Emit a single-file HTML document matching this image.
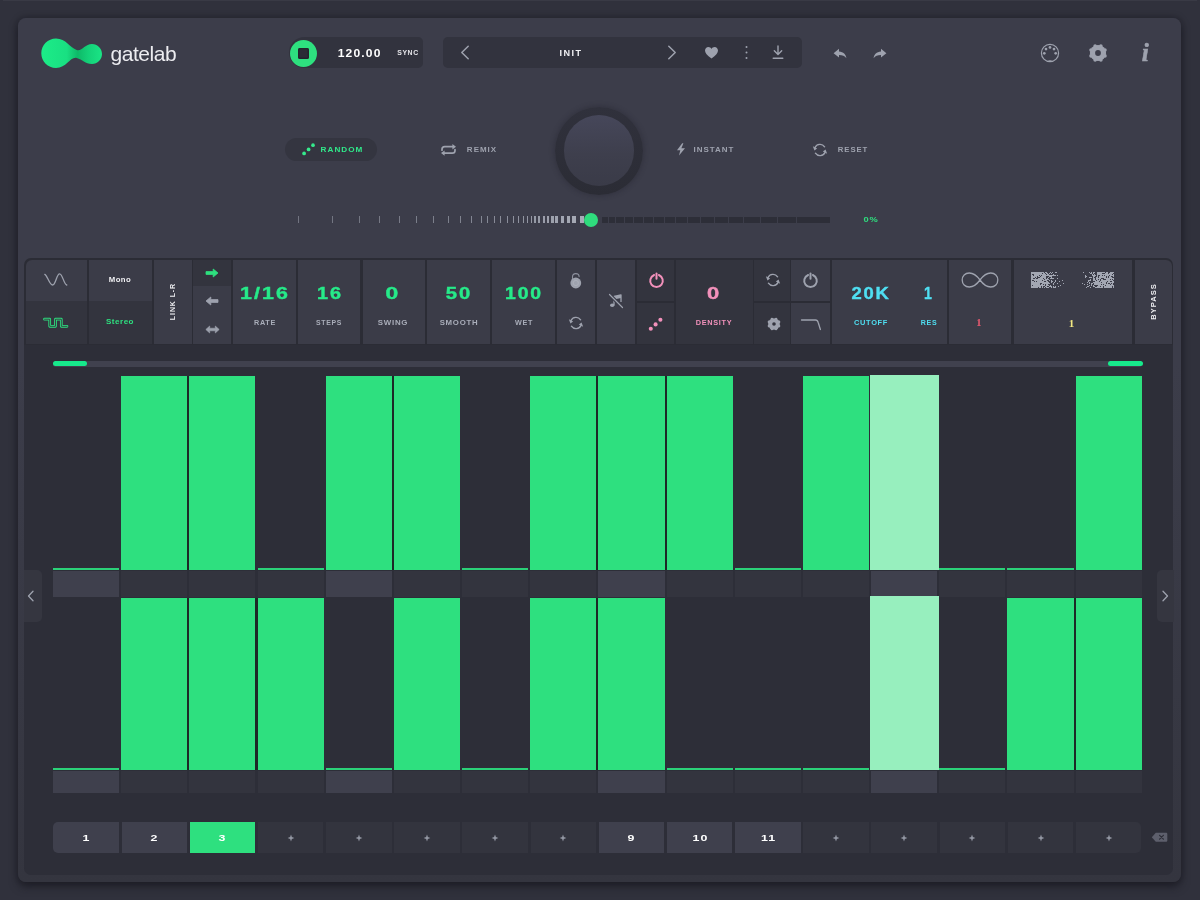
<!DOCTYPE html>
<html lang="en"><head><meta charset="utf-8"><title>gatelab</title>
<style>
html,body{margin:0;padding:0;}
body{width:1200px;height:900px;overflow:hidden;position:relative;background:#30313c;font-family:"Liberation Sans",sans-serif;}
.b{position:absolute;display:block;}
.t{position:absolute;white-space:nowrap;line-height:1;font-family:"Liberation Sans",sans-serif;}
#root{position:absolute;left:0;top:0;width:1200px;height:900px;will-change:transform;}
</style></head><body><div id="root">
<div class="b" style="left:18px;top:18px;width:1163px;height:863.5px;background:linear-gradient(180deg,#3c3d4a 0%,#3c3d4a 40%,#34353f 100%);border-radius:8px;box-shadow:0 5px 9px rgba(20,20,28,.55),0 0 7px rgba(20,20,28,.4);"></div>
<div class="b" style="left:3px;top:0px;width:1194px;height:1.2px;background:#393a45;"></div>
<svg class="b" style="left:40px;top:36px;" width="64" height="34" viewBox="0 0 64 34"><defs><linearGradient id="lg" x1="0" x2="1" y1="0" y2="0"><stop offset="0" stop-color="#1cec88"/><stop offset=".42" stop-color="#19e082"/><stop offset=".60" stop-color="#0eb968"/><stop offset=".78" stop-color="#14d279"/><stop offset="1" stop-color="#1ae485"/></linearGradient></defs>
<path d="M16 2.600 C26 2.600 30 12 36.700 14 C42 15.500 45 8 52 8 C57.500 8 62 12.500 62 18 C62 23.500 57.500 28 52 28 C45 28 42.500 23.500 36.700 22 C30 20.500 27 32 16 32 C7.900 32 1.300 25.400 1.300 17.300 C1.300 9.200 7.900 2.600 16 2.600 Z" fill="url(#lg)"/></svg>
<div class="t" style="left:110.500px;top:42.900px;font-size:21px;color:#ececf0;letter-spacing:-0.450px;font-weight:400;">gatelab</div>
<div class="b" style="left:289px;top:37px;width:134px;height:31px;background:#32333e;border-radius:16px 5px 5px 16px;"></div>
<div class="b" style="left:289.5px;top:39.5px;width:27px;height:27px;background:#2ee07f;border-radius:50%;"></div>
<div class="b" style="left:297.5px;top:47.5px;width:11px;height:11px;background:#2b2c36;border-radius:2px;box-shadow:inset 0 0 0 1.5px #23242c;"></div>
<div class="t" style="left:358.7px;top:54px;font-size:11.5px;color:#fff;letter-spacing:1.1px;padding-left:1.1px;font-weight:700;transform:translate(-50%,-50%) scaleX(1.05);">120.00</div>
<div class="t" style="left:408.0px;top:52px;font-size:7px;color:#e6e6ea;letter-spacing:0.6px;margin-left:0.30px;font-weight:700;transform:translate(-50%,-50%) scaleX(0.98);">SYNC</div>
<div class="b" style="left:443px;top:37px;width:359px;height:31px;background:#32333e;border-radius:5px;"></div>
<svg class="b" style="left:458px;top:44px;" width="14" height="17" viewBox="0 0 14 17"><path d="M10.200 2.200 L3.800 8.500 L10.200 14.800" fill="none" stroke="#9ea2ae" stroke-width="1.500" stroke-linecap="round" stroke-linejoin="round"/></svg>
<svg class="b" style="left:665px;top:44px;" width="14" height="17" viewBox="0 0 14 17"><path d="M3.800 2.200 L10.200 8.500 L3.800 14.800" fill="none" stroke="#9ea2ae" stroke-width="1.500" stroke-linecap="round" stroke-linejoin="round"/></svg>
<div class="t" style="left:570.2px;top:52.8px;font-size:8.5px;color:#f0f0f3;letter-spacing:1.4px;margin-left:0.70px;font-weight:700;transform:translate(-50%,-50%) scaleX(1.066);">INIT</div>
<svg class="b" style="left:704px;top:46px;" width="15" height="14" viewBox="0 0 15 14"><path d="M7.500 12.500 C3 9.500 1 7 1 4.600 C1 2.500 2.600 1 4.400 1 C5.700 1 6.900 1.700 7.500 2.900 C8.100 1.700 9.300 1 10.600 1 C12.400 1 14 2.500 14 4.600 C14 7 12 9.500 7.500 12.500 Z" fill="#9ea2ae"/></svg>
<svg class="b" style="left:744px;top:45px;" width="5" height="15" viewBox="0 0 5 15"><circle cx="2.500" cy="2" r="1" fill="#9ea2ae"/><circle cx="2.500" cy="7.500" r="1" fill="#9ea2ae"/><circle cx="2.500" cy="13" r="1" fill="#9ea2ae"/></svg>
<svg class="b" style="left:772px;top:45px;" width="12" height="15" viewBox="0 0 12 15"><path d="M6 1 V9 M2.300 5.800 L6 9.500 L9.700 5.800 M1.200 13.200 H10.800" fill="none" stroke="#9ea2ae" stroke-width="1.400" stroke-linecap="round" stroke-linejoin="round"/></svg>
<svg class="b" style="left:833px;top:47.5px;" width="14" height="11" viewBox="0 0 14 11"><path d="M6 0.800 L0.600 5.200 L6 9.600 V6.900 C9.500 6.900 11.800 7.800 13.400 10.200 C12.900 6.200 10.500 3.700 6 3.400 Z" fill="#9ea2ae"/></svg>
<svg class="b" style="left:873px;top:47.5px;" width="14" height="11" viewBox="0 0 14 11"><g transform="translate(14,0) scale(-1,1)"><path d="M6 0.800 L0.600 5.200 L6 9.600 V6.900 C9.500 6.900 11.800 7.800 13.400 10.200 C12.900 6.200 10.500 3.700 6 3.400 Z" fill="#9ea2ae"/></g></svg>
<svg class="b" style="left:1039.5px;top:42.5px;" width="20" height="20" viewBox="0 0 20 20"><circle cx="10" cy="10" r="8.600" fill="none" stroke="#9ea2ae" stroke-width="1.200"/><circle cx="4.300" cy="10.300" r="1.350" fill="#9ea2ae"/><circle cx="6" cy="6.100" r="1.350" fill="#9ea2ae"/><circle cx="10" cy="4.400" r="1.350" fill="#9ea2ae"/><circle cx="14" cy="6.100" r="1.350" fill="#9ea2ae"/><circle cx="15.700" cy="10.300" r="1.350" fill="#9ea2ae"/><rect x="8.500" y="17.300" width="3" height="1.600" fill="#9ea2ae"/></svg>
<svg class="b" style="left:1087.5px;top:42.5px;" width="20" height="20" viewBox="0 0 20 20"><circle cx="10" cy="10" r="8.10" fill="#9ea2ae"/><circle cx="12.89" cy="3.02" r="1.80" fill="#9ea2ae"/><circle cx="16.98" cy="7.11" r="1.80" fill="#9ea2ae"/><circle cx="16.98" cy="12.89" r="1.80" fill="#9ea2ae"/><circle cx="12.89" cy="16.98" r="1.80" fill="#9ea2ae"/><circle cx="7.11" cy="16.98" r="1.80" fill="#9ea2ae"/><circle cx="3.02" cy="12.89" r="1.80" fill="#9ea2ae"/><circle cx="3.02" cy="7.11" r="1.80" fill="#9ea2ae"/><circle cx="7.11" cy="3.02" r="1.80" fill="#9ea2ae"/><circle cx="10" cy="10" r="2.9" fill="#3c3d4a"/></svg>
<div class="t" style="left:1145.3px;top:52.5px;font-size:25.5px;color:#9ea2ae;letter-spacing:0px;padding-left:0px;font-weight:700;transform:translate(-50%,-50%);font-style:italic;-webkit-text-stroke:0.5px;font-family:'Liberation Serif',serif;">i</div>
<div class="b" style="left:285px;top:137.5px;width:91.5px;height:23.2px;background:#343540;border-radius:12px;"></div>
<svg class="b" style="left:300px;top:142px;" width="16" height="14" viewBox="0 0 16 14"><circle cx="4.100" cy="11.400" r="1.850" fill="#35ea8c"/><circle cx="8.600" cy="7.400" r="1.850" fill="#35ea8c"/><circle cx="13" cy="3.200" r="1.850" fill="#35ea8c"/></svg>
<div class="t" style="left:341.4px;top:149.8px;font-size:8px;color:#30e98a;letter-spacing:1.0px;margin-left:0.50px;font-weight:700;transform:translate(-50%,-50%) scaleX(1.019);">RANDOM</div>
<svg class="b" style="left:440px;top:143px;" width="17" height="14" viewBox="0 0 17 14"><path d="M2 7.200 V6.400 C2 4.800 3.200 3.700 4.700 3.700 H13 M15 6.600 V7.400 C15 9 13.800 10.100 12.300 10.100 H4" fill="none" stroke="#9ea2ae" stroke-width="1.700" stroke-linecap="round" stroke-linejoin="round"/><path d="M12.400 1 L16 3.700 L12.400 6.400Z M4.600 7.400 L1 10.100 L4.600 12.800Z" fill="#9ea2ae"/></svg>
<div class="t" style="left:481.6px;top:149.8px;font-size:8px;color:#9ea2ae;letter-spacing:1.0px;margin-left:0.50px;font-weight:700;transform:translate(-50%,-50%) scaleX(0.997);">REMIX</div>
<div class="b" style="left:554.5px;top:106.5px;width:88px;height:88px;background:linear-gradient(180deg,#30313c,#2b2c35);border-radius:50%;box-shadow:0 0 5px 1px rgba(38,38,48,.45);"></div>
<div class="b" style="left:563.5px;top:115px;width:70.5px;height:70.5px;background:linear-gradient(180deg,#46475a 0%,#3e3f4d 55%,#3a3b48 100%);border-radius:50%;"></div>
<svg class="b" style="left:676px;top:143px;" width="10" height="13" viewBox="0 0 10 13"><path d="M6.200 0.300 L1 7.200 H4.300 L3 12.600 L9 5.200 H5.400 L7.400 0.300 Z" fill="#9ea2ae"/></svg>
<div class="t" style="left:713.5px;top:149.8px;font-size:8px;color:#9ea2ae;letter-spacing:1.0px;margin-left:0.50px;font-weight:700;transform:translate(-50%,-50%) scaleX(0.997);">INSTANT</div>
<svg class="b" style="left:811px;top:141px;" width="18" height="18" viewBox="0 0 18 18"><path d="M13.59 5.79 A5.6 5.6 0 0 0 3.92 6.63" fill="none" stroke="#9ea2ae" stroke-width="1.4" stroke-linecap="round"/><path d="M6.15 7.55 L1.87 5.37 L3.42 9.49Z" fill="#9ea2ae"/><path d="M4.41 12.21 A5.6 5.6 0 0 0 14.08 11.37" fill="none" stroke="#9ea2ae" stroke-width="1.4" stroke-linecap="round"/><path d="M11.85 10.45 L16.13 12.63 L14.58 8.51Z" fill="#9ea2ae"/></svg>
<div class="t" style="left:852.7px;top:149.8px;font-size:8px;color:#9ea2ae;letter-spacing:1.0px;margin-left:0.50px;font-weight:700;transform:translate(-50%,-50%) scaleX(0.963);">RESET</div>
<div class="b" style="left:297.9px;top:216.1px;width:1.2px;height:7.2px;background:#a7abb7;opacity:0.50;"></div>
<div class="b" style="left:331.9px;top:216.1px;width:1.2px;height:7.2px;background:#a7abb7;opacity:0.52;"></div>
<div class="b" style="left:358.9px;top:216.1px;width:1.2px;height:7.2px;background:#a7abb7;opacity:0.53;"></div>
<div class="b" style="left:378.9px;top:216.1px;width:1.2px;height:7.2px;background:#a7abb7;opacity:0.55;"></div>
<div class="b" style="left:398.9px;top:216.1px;width:1.2px;height:7.2px;background:#a7abb7;opacity:0.57;"></div>
<div class="b" style="left:415.9px;top:216.1px;width:1.2px;height:7.2px;background:#a7abb7;opacity:0.59;"></div>
<div class="b" style="left:432.9px;top:216.1px;width:1.2px;height:7.2px;background:#a7abb7;opacity:0.60;"></div>
<div class="b" style="left:447.9px;top:216.1px;width:1.2px;height:7.2px;background:#a7abb7;opacity:0.62;"></div>
<div class="b" style="left:459.9px;top:216.1px;width:1.2px;height:7.2px;background:#a7abb7;opacity:0.64;"></div>
<div class="b" style="left:470.9px;top:216.1px;width:1.2px;height:7.2px;background:#a7abb7;opacity:0.66;"></div>
<div class="b" style="left:480.9px;top:216.1px;width:1.2px;height:7.2px;background:#a7abb7;opacity:0.67;"></div>
<div class="b" style="left:486.89px;top:216.1px;width:1.21px;height:7.2px;background:#a7abb7;opacity:0.69;"></div>
<div class="b" style="left:493.89px;top:216.1px;width:1.22px;height:7.2px;background:#a7abb7;opacity:0.71;"></div>
<div class="b" style="left:499.88px;top:216.1px;width:1.25px;height:7.2px;background:#a7abb7;opacity:0.72;"></div>
<div class="b" style="left:506.86px;top:216.1px;width:1.28px;height:7.2px;background:#a7abb7;opacity:0.74;"></div>
<div class="b" style="left:512.84px;top:216.1px;width:1.33px;height:7.2px;background:#a7abb7;opacity:0.76;"></div>
<div class="b" style="left:517.8px;top:216.1px;width:1.39px;height:7.2px;background:#a7abb7;opacity:0.78;"></div>
<div class="b" style="left:522.76px;top:216.1px;width:1.47px;height:7.2px;background:#a7abb7;opacity:0.79;"></div>
<div class="b" style="left:526.92px;top:216.1px;width:1.57px;height:7.2px;background:#a7abb7;opacity:0.81;"></div>
<div class="b" style="left:530.65px;top:216.1px;width:1.69px;height:7.2px;background:#a7abb7;opacity:0.83;"></div>
<div class="b" style="left:534.49px;top:216.1px;width:1.83px;height:7.2px;background:#a7abb7;opacity:0.84;"></div>
<div class="b" style="left:538.29px;top:216.1px;width:2.01px;height:7.2px;background:#a7abb7;opacity:0.86;"></div>
<div class="b" style="left:542.6px;top:216.1px;width:2.21px;height:7.2px;background:#a7abb7;opacity:0.88;"></div>
<div class="b" style="left:546.58px;top:216.1px;width:2.44px;height:7.2px;background:#a7abb7;opacity:0.90;"></div>
<div class="b" style="left:550.85px;top:216.1px;width:2.7px;height:7.2px;background:#a7abb7;opacity:0.91;"></div>
<div class="b" style="left:555.4px;top:216.1px;width:3.0px;height:7.2px;background:#a7abb7;opacity:0.93;"></div>
<div class="b" style="left:560.83px;top:216.1px;width:3.34px;height:7.2px;background:#a7abb7;opacity:0.95;"></div>
<div class="b" style="left:566.64px;top:216.1px;width:3.72px;height:7.2px;background:#a7abb7;opacity:0.97;"></div>
<div class="b" style="left:572.13px;top:216.1px;width:4.14px;height:7.2px;background:#a7abb7;opacity:0.98;"></div>
<div class="b" style="left:579.7px;top:216.1px;width:4.6px;height:7.2px;background:#a7abb7;opacity:1.00;"></div>
<div class="b" style="left:601.8px;top:216.6px;width:3.1px;height:6.7px;background:#2d2e38;"></div>
<div class="b" style="left:605.1px;top:216.6px;width:3.1px;height:6.7px;background:#2d2e38;"></div>
<div class="b" style="left:609.1px;top:216.6px;width:6.1px;height:6.7px;background:#2d2e38;"></div>
<div class="b" style="left:616.4px;top:216.6px;width:7.9px;height:6.7px;background:#2d2e38;"></div>
<div class="b" style="left:624.8px;top:216.6px;width:8.1px;height:6.7px;background:#2d2e38;"></div>
<div class="b" style="left:634.1px;top:216.6px;width:8.5px;height:6.7px;background:#2d2e38;"></div>
<div class="b" style="left:643.8px;top:216.6px;width:9.5px;height:6.7px;background:#2d2e38;"></div>
<div class="b" style="left:654.1px;top:216.6px;width:9.7px;height:6.7px;background:#2d2e38;"></div>
<div class="b" style="left:664.8px;top:216.6px;width:10.5px;height:6.7px;background:#2d2e38;"></div>
<div class="b" style="left:676.4px;top:216.6px;width:10.9px;height:6.7px;background:#2d2e38;"></div>
<div class="b" style="left:688.4px;top:216.6px;width:11.3px;height:6.7px;background:#2d2e38;"></div>
<div class="b" style="left:701.1px;top:216.6px;width:13.1px;height:6.7px;background:#2d2e38;"></div>
<div class="b" style="left:715.4px;top:216.6px;width:12.9px;height:6.7px;background:#2d2e38;"></div>
<div class="b" style="left:729.4px;top:216.6px;width:13.9px;height:6.7px;background:#2d2e38;"></div>
<div class="b" style="left:744.4px;top:216.6px;width:15.3px;height:6.7px;background:#2d2e38;"></div>
<div class="b" style="left:760.8px;top:216.6px;width:16.5px;height:6.7px;background:#2d2e38;"></div>
<div class="b" style="left:778.4px;top:216.6px;width:17.9px;height:6.7px;background:#2d2e38;"></div>
<div class="b" style="left:797.4px;top:216.6px;width:32.9px;height:6.7px;background:#2d2e38;"></div>
<div class="b" style="left:584px;top:212.5px;width:14px;height:14px;background:#2fdc7d;border-radius:50%;"></div>
<div class="t" style="left:870.5px;top:219.9px;font-size:8px;color:#2ee07f;letter-spacing:0.6px;margin-left:0.30px;font-weight:700;transform:translate(-50%,-50%) scaleX(1.16);">0%</div>
<div class="b" style="left:24px;top:344px;width:1149px;height:530.5px;background:#2d2e38;border-radius:0 0 7px 7px;"></div>
<div class="b" style="left:24px;top:258px;width:1149px;height:87px;background:#2b2c35;border-radius:7px 7px 0 0;"></div>
<div class="b" style="left:25.6px;top:259.5px;width:61.4px;height:41.5px;background:#3b3c48;border-radius:6px 0 0 0;"></div>
<div class="b" style="left:25.6px;top:301px;width:61.4px;height:42.5px;background:#33343e;"></div>
<div class="b" style="left:89px;top:259.5px;width:62.6px;height:41.5px;background:#3b3c48;"></div>
<div class="b" style="left:89px;top:301px;width:62.6px;height:42.5px;background:#33343e;"></div>
<div class="b" style="left:153.6px;top:259.5px;width:38.0px;height:84.0px;background:#3b3c48;"></div>
<div class="b" style="left:193px;top:259.5px;width:38px;height:26.5px;background:#33343e;"></div>
<div class="b" style="left:193px;top:286px;width:38px;height:57.5px;background:#3b3c48;"></div>
<div class="b" style="left:233.4px;top:259.5px;width:62.6px;height:84.0px;background:#3b3c48;"></div>
<div class="b" style="left:298px;top:259.5px;width:62.4px;height:84.0px;background:#3b3c48;"></div>
<div class="b" style="left:362.6px;top:259.5px;width:62.2px;height:84.0px;background:#3b3c48;"></div>
<div class="b" style="left:427.4px;top:259.5px;width:63.0px;height:84.0px;background:#3b3c48;"></div>
<div class="b" style="left:492.4px;top:259.5px;width:62.6px;height:84.0px;background:#3b3c48;"></div>
<div class="b" style="left:557px;top:259.5px;width:38px;height:84.0px;background:#3b3c48;"></div>
<div class="b" style="left:597px;top:259.5px;width:38px;height:84.0px;background:#3b3c48;"></div>
<div class="b" style="left:636.6px;top:259.5px;width:37.8px;height:41.0px;background:#33343e;"></div>
<div class="b" style="left:636.6px;top:302.5px;width:37.8px;height:41.0px;background:#33343e;"></div>
<div class="b" style="left:676.4px;top:259.5px;width:76.6px;height:84.0px;background:#33343e;"></div>
<div class="b" style="left:754.4px;top:259.5px;width:35.2px;height:41.0px;background:#33343e;"></div>
<div class="b" style="left:754.4px;top:302.5px;width:35.2px;height:41.0px;background:#33343e;"></div>
<div class="b" style="left:791.2px;top:259.5px;width:38.8px;height:41.0px;background:#3b3c48;"></div>
<div class="b" style="left:791.2px;top:302.5px;width:38.8px;height:41.0px;background:#3b3c48;"></div>
<div class="b" style="left:832.4px;top:259.5px;width:114.6px;height:84.0px;background:#3b3c48;"></div>
<div class="b" style="left:949px;top:259.5px;width:62.4px;height:84.0px;background:#3b3c48;"></div>
<div class="b" style="left:1013.6px;top:259.5px;width:118.9px;height:84.0px;background:#3b3c48;"></div>
<div class="b" style="left:1134.7px;top:259.5px;width:37.8px;height:84.0px;background:#3b3c48;border-radius:0 6px 0 0;"></div>
<svg class="b" style="left:43px;top:268px;" width="26" height="22" viewBox="0 0 26 22"><path d="M1.800 6.300 C4.300 7.300 6.300 17 9.600 17 C12.900 17 13.500 5.800 16.600 5.800 C19.700 5.800 20.700 16.300 23.700 17" fill="none" stroke="#9ea2ae" stroke-width="1.300" stroke-linecap="round"/></svg>
<svg class="b" style="left:43px;top:314px;" width="26" height="18" viewBox="0 0 26 18"><path d="M1.500 5.200 H6.700 V12.300 H12.500 V5.200 H18.300 V12.300 H24" fill="none" stroke="#2ee07f" stroke-width="2.700" stroke-linejoin="round" stroke-linecap="round"/><path d="M1.500 5.200 H6.700 V12.300 H12.500 V5.200 H18.300 V12.300 H24" fill="none" stroke="#33343e" stroke-width="0.900" stroke-linejoin="round" stroke-linecap="round"/></svg>
<div class="t" style="left:120.0px;top:280.3px;font-size:8px;color:#f0f0f3;letter-spacing:0.5px;margin-left:0.25px;font-weight:700;transform:translate(-50%,-50%) scaleX(0.97);">Mono</div>
<div class="t" style="left:119.7px;top:322.3px;font-size:8px;color:#2ee07f;letter-spacing:0.5px;margin-left:0.25px;font-weight:700;transform:translate(-50%,-50%) scaleX(1.006);">Stereo</div>
<div class="t" style="left:171.700px;top:302px;font-size:7px;color:#f0f0f3;letter-spacing:0.900px;padding-left:0.900px;font-weight:700;transform:translate(-50%,-50%) rotate(-90deg);">LINK L-R</div>
<svg class="b" style="left:205px;top:268px;" width="14" height="10" viewBox="0 0 14 10"><path d="M1 3.600 H8.200 V1 L13 5 L8.200 9 V6.400 H1 Z" fill="#2ee07f" stroke="#2ee07f" stroke-width="0.800" stroke-linejoin="round"/></svg>
<svg class="b" style="left:205px;top:296px;" width="14" height="10" viewBox="0 0 14 10"><g transform="translate(14,0) scale(-1,1)"><path d="M1 3.600 H8.200 V1 L13 5 L8.200 9 V6.400 H1 Z" fill="#9ea2ae" stroke="#9ea2ae" stroke-width="0.800" stroke-linejoin="round"/></g></svg>
<svg class="b" style="left:204.5px;top:324.5px;" width="15" height="9" viewBox="0 0 15 9"><path d="M4.700 1 L0.800 4.500 L4.700 8 V5.800 H10.300 V8 L14.200 4.500 L10.300 1 V3.200 H4.700 Z" fill="#9ea2ae" stroke="#9ea2ae" stroke-width="0.600" stroke-linejoin="round"/></svg>
<div class="t" style="left:264.0px;top:294.4px;font-size:16.8px;color:#26ea89;letter-spacing:1.6px;margin-left:0.80px;font-weight:700;transform:translate(-50%,-50%) scaleX(1.274);-webkit-text-stroke:0.4px;">1/16</div>
<div class="t" style="left:264.2px;top:323px;font-size:7.5px;color:#a9adb9;letter-spacing:0.7px;margin-left:0.35px;font-weight:700;transform:translate(-50%,-50%) scaleX(0.969);">RATE</div>
<div class="t" style="left:328.8px;top:294.4px;font-size:16.8px;color:#26ea89;letter-spacing:1.6px;margin-left:0.80px;font-weight:700;transform:translate(-50%,-50%) scaleX(1.182);-webkit-text-stroke:0.4px;">16</div>
<div class="t" style="left:328.8px;top:323px;font-size:7.5px;color:#a9adb9;letter-spacing:0.7px;margin-left:0.35px;font-weight:700;transform:translate(-50%,-50%) scaleX(0.921);">STEPS</div>
<div class="t" style="left:392.0px;top:294.4px;font-size:16.8px;color:#26ea89;letter-spacing:1.6px;margin-left:0.80px;font-weight:700;transform:translate(-50%,-50%) scaleX(1.365);-webkit-text-stroke:0.4px;">0</div>
<div class="t" style="left:393.0px;top:323px;font-size:7.5px;color:#a9adb9;letter-spacing:0.7px;margin-left:0.35px;font-weight:700;transform:translate(-50%,-50%) scaleX(1.054);">SWING</div>
<div class="t" style="left:458.0px;top:294.4px;font-size:16.8px;color:#26ea89;letter-spacing:1.6px;margin-left:0.80px;font-weight:700;transform:translate(-50%,-50%) scaleX(1.204);-webkit-text-stroke:0.4px;">50</div>
<div class="t" style="left:458.5px;top:323px;font-size:7.5px;color:#a9adb9;letter-spacing:0.7px;margin-left:0.35px;font-weight:700;transform:translate(-50%,-50%) scaleX(1.042);">SMOOTH</div>
<div class="t" style="left:523.3px;top:294.4px;font-size:16.8px;color:#26ea89;letter-spacing:1.6px;margin-left:0.80px;font-weight:700;transform:translate(-50%,-50%) scaleX(1.157);-webkit-text-stroke:0.4px;">100</div>
<div class="t" style="left:523.2px;top:323px;font-size:7.5px;color:#a9adb9;letter-spacing:0.7px;margin-left:0.35px;font-weight:700;transform:translate(-50%,-50%) scaleX(0.956);">WET</div>
<svg class="b" style="left:568px;top:272px;" width="16" height="18" viewBox="0 0 16 18"><path d="M4.500 8 V5 C4.500 3 5.900 1.600 7.800 1.600 C9.700 1.600 11.100 3 11.100 4.600" fill="none" stroke="#8d919e" stroke-width="1.100" stroke-linecap="round"/><circle cx="7.800" cy="11" r="5.400" fill="#9ea2ae"/><circle cx="7.800" cy="11" r="2.600" fill="none" stroke="#aeb2bd" stroke-width="0.800"/></svg>
<svg class="b" style="left:566.5px;top:313.5px;" width="18" height="18" viewBox="0 0 18 18"><path d="M13.59 5.79 A5.6 5.6 0 0 0 3.92 6.63" fill="none" stroke="#9ea2ae" stroke-width="1.4" stroke-linecap="round"/><path d="M6.15 7.55 L1.87 5.37 L3.42 9.49Z" fill="#9ea2ae"/><path d="M4.41 12.21 A5.6 5.6 0 0 0 14.08 11.37" fill="none" stroke="#9ea2ae" stroke-width="1.4" stroke-linecap="round"/><path d="M11.85 10.45 L16.13 12.63 L14.58 8.51Z" fill="#9ea2ae"/></svg>
<svg class="b" style="left:607px;top:292px;" width="18" height="18" viewBox="0 0 18 18"><path d="M7 13 V4.500 L14 3 V10" fill="none" stroke="#9ea2ae" stroke-width="1.300" stroke-linejoin="round"/><path d="M7 4.500 L14 3 V6 L7 7.500Z" fill="#9ea2ae"/><ellipse cx="5.200" cy="13.200" rx="2.200" ry="1.800" fill="#9ea2ae"/><path d="M2.500 2.500 L15.500 15.500" stroke="#3b3c48" stroke-width="3.400"/><path d="M2.500 2.500 L15.500 15.500" stroke="#9ea2ae" stroke-width="1.200" stroke-linecap="round"/></svg>
<svg class="b" style="left:647.5px;top:272.1px;" width="17" height="17" viewBox="0 0 17 17"><path d="M6.100 3 A6.300 6.300 0 1 0 10.900 3" fill="none" stroke="#f391bb" stroke-width="2" stroke-linecap="round"/><path d="M8.500 1.500 V6.800" stroke="#f391bb" stroke-width="2" stroke-linecap="round"/></svg>
<svg class="b" style="left:646px;top:315px;" width="18" height="18" viewBox="0 0 18 18"><circle cx="4.800" cy="13.800" r="2.050" fill="#f391bb"/><circle cx="9.600" cy="9.400" r="2.050" fill="#f391bb"/><circle cx="14.400" cy="4.800" r="2.050" fill="#f391bb"/></svg>
<div class="t" style="left:713.2px;top:294.4px;font-size:16.8px;color:#f391bb;letter-spacing:0px;margin-left:0.00px;font-weight:700;transform:translate(-50%,-50%) scaleX(1.31);-webkit-text-stroke:0.4px;">0</div>
<div class="t" style="left:714.1px;top:323px;font-size:7.5px;color:#f391bb;letter-spacing:0.7px;margin-left:0.35px;font-weight:700;transform:translate(-50%,-50%) scaleX(0.977);">DENSITY</div>
<svg class="b" style="left:764px;top:271px;" width="18" height="18" viewBox="0 0 18 18"><path d="M13.59 5.79 A5.6 5.6 0 0 0 3.92 6.63" fill="none" stroke="#9ea2ae" stroke-width="1.4" stroke-linecap="round"/><path d="M6.15 7.55 L1.87 5.37 L3.42 9.49Z" fill="#9ea2ae"/><path d="M4.41 12.21 A5.6 5.6 0 0 0 14.08 11.37" fill="none" stroke="#9ea2ae" stroke-width="1.4" stroke-linecap="round"/><path d="M11.85 10.45 L16.13 12.63 L14.58 8.51Z" fill="#9ea2ae"/></svg>
<svg class="b" style="left:763.6px;top:314.2px;" width="20" height="20" viewBox="0 0 20 20"><circle cx="10" cy="10" r="5.85" fill="#9ea2ae"/><circle cx="12.09" cy="4.96" r="1.30" fill="#9ea2ae"/><circle cx="15.04" cy="7.91" r="1.30" fill="#9ea2ae"/><circle cx="15.04" cy="12.09" r="1.30" fill="#9ea2ae"/><circle cx="12.09" cy="15.04" r="1.30" fill="#9ea2ae"/><circle cx="7.91" cy="15.04" r="1.30" fill="#9ea2ae"/><circle cx="4.96" cy="12.09" r="1.30" fill="#9ea2ae"/><circle cx="4.96" cy="7.91" r="1.30" fill="#9ea2ae"/><circle cx="7.91" cy="4.96" r="1.30" fill="#9ea2ae"/><circle cx="10" cy="10" r="1.8" fill="#33343e"/></svg>
<svg class="b" style="left:802.1px;top:272.2px;" width="17" height="17" viewBox="0 0 17 17"><path d="M6.100 3 A6.300 6.300 0 1 0 10.900 3" fill="none" stroke="#9ea2ae" stroke-width="2" stroke-linecap="round"/><path d="M8.500 1.500 V6.800" stroke="#9ea2ae" stroke-width="2" stroke-linecap="round"/></svg>
<svg class="b" style="left:799px;top:316px;" width="24" height="16" viewBox="0 0 24 16"><path d="M2.500 4 H16.500 C18.300 4 18.800 5 19.200 6.500 L21.400 13.500" fill="none" stroke="#9ea2ae" stroke-width="1.300" stroke-linecap="round" stroke-linejoin="round"/></svg>
<div class="t" style="left:870.0px;top:294.4px;font-size:16.8px;color:#4fdff2;letter-spacing:1.6px;margin-left:0.80px;font-weight:700;transform:translate(-50%,-50%) scaleX(1.1);-webkit-text-stroke:0.4px;">20K</div>
<div class="t" style="left:927.9px;top:294.4px;font-size:16.8px;color:#4fdff2;letter-spacing:0px;margin-left:0.00px;font-weight:700;transform:translate(-50%,-50%) scaleX(0.846);-webkit-text-stroke:0.4px;">1</div>
<div class="t" style="left:870.7px;top:323px;font-size:7.5px;color:#4fdff2;letter-spacing:0.7px;margin-left:0.35px;font-weight:700;transform:translate(-50%,-50%) scaleX(0.992);">CUTOFF</div>
<div class="t" style="left:929.1px;top:323px;font-size:7.5px;color:#4fdff2;letter-spacing:0.7px;margin-left:0.35px;font-weight:700;transform:translate(-50%,-50%) scaleX(0.942);">RES</div>
<svg class="b" style="left:960px;top:271px;" width="40" height="18" viewBox="0 0 40 18"><path d="M20 9 C16 3.500 12.500 2 9.300 2 C5 2 2.200 5 2.200 9 C2.200 13 5 16 9.300 16 C12.500 16 16 14.500 20 9 C24 3.500 27.500 2 30.700 2 C35 2 37.800 5 37.800 9 C37.800 13 35 16 30.700 16 C27.500 16 24 14.500 20 9 Z" fill="none" stroke="#9ea2ae" stroke-width="1.300"/></svg>
<div class="t" style="left:978.8px;top:323px;font-size:10.5px;color:#ea5a70;letter-spacing:0px;padding-left:0px;font-weight:700;transform:translate(-50%,-50%);font-family:'Liberation Serif',serif;">1</div>
<svg class="b" style="left:1031px;top:272px;" width="36" height="16" viewBox="0 0 36 16"><path d="M0 0h13v1h-13zM14 0h2v1h-2zM19 0h1v1h-1zM21 0h1v1h-1zM24 0h2v1h-2zM0 1h11v1h-11zM12 1h2v1h-2zM15 1h2v1h-2zM18 1h1v1h-1zM20 1h1v1h-1zM0 2h1v1h-1zM3 2h12v1h-12zM16 2h2v1h-2zM22 2h1v1h-1zM0 3h2v1h-2zM3 3h5v1h-5zM9 3h1v1h-1zM11 3h14v1h-14zM26 3h1v1h-1zM0 4h6v1h-6zM7 4h2v1h-2zM10 4h5v1h-5zM18 4h3v1h-3zM0 5h4v1h-4zM5 5h1v1h-1zM9 5h6v1h-6zM17 5h1v1h-1zM20 5h1v1h-1zM0 6h2v1h-2zM4 6h1v1h-1zM7 6h5v1h-5zM13 6h2v1h-2zM16 6h1v1h-1zM19 6h4v1h-4zM26 6h1v1h-1zM0 7h13v1h-13zM14 7h4v1h-4zM0 8h1v1h-1zM3 8h8v1h-8zM12 8h4v1h-4zM18 8h1v1h-1zM20 8h1v1h-1zM24 8h1v1h-1zM31 8h1v1h-1zM0 9h3v1h-3zM4 9h1v1h-1zM6 9h7v1h-7zM15 9h2v1h-2zM20 9h2v1h-2zM24 9h1v1h-1zM28 9h1v1h-1zM0 10h18v1h-18zM20 10h1v1h-1zM23 10h1v1h-1zM0 11h9v1h-9zM11 11h8v1h-8zM22 11h1v1h-1zM26 11h1v1h-1zM32 11h1v1h-1zM0 12h9v1h-9zM10 12h2v1h-2zM13 12h1v1h-1zM15 12h2v1h-2zM22 12h1v1h-1zM0 13h1v1h-1zM2 13h12v1h-12zM15 13h3v1h-3zM19 13h1v1h-1zM29 13h1v1h-1zM0 14h10v1h-10zM11 14h1v1h-1zM14 14h2v1h-2zM18 14h3v1h-3zM22 14h1v1h-1zM24 14h1v1h-1zM27 14h1v1h-1zM0 15h7v1h-7zM8 15h2v1h-2zM11 15h1v1h-1zM13 15h1v1h-1zM15 15h3v1h-3zM20 15h1v1h-1zM22 15h3v1h-3z" fill="#a3a7b3" shape-rendering="crispEdges"/></svg>
<svg class="b" style="left:1078px;top:272px;" width="36" height="16" viewBox="0 0 36 16"><path d="M5 0h1v1h-1zM11 0h1v1h-1zM13 0h1v1h-1zM15 0h2v1h-2zM19 0h8v1h-8zM28 0h2v1h-2zM32 0h4v1h-4zM12 1h2v1h-2zM15 1h1v1h-1zM19 1h5v1h-5zM27 1h3v1h-3zM31 1h4v1h-4zM14 2h1v1h-1zM16 2h1v1h-1zM19 2h15v1h-15zM35 2h1v1h-1zM7 3h1v1h-1zM14 3h4v1h-4zM19 3h1v1h-1zM22 3h2v1h-2zM25 3h1v1h-1zM27 3h4v1h-4zM32 3h4v1h-4zM7 4h2v1h-2zM15 4h2v1h-2zM19 4h1v1h-1zM21 4h7v1h-7zM29 4h1v1h-1zM31 4h2v1h-2zM35 4h1v1h-1zM7 5h1v1h-1zM11 5h3v1h-3zM15 5h1v1h-1zM18 5h2v1h-2zM21 5h7v1h-7zM29 5h1v1h-1zM31 5h3v1h-3zM15 6h2v1h-2zM18 6h5v1h-5zM26 6h10v1h-10zM12 7h1v1h-1zM15 7h2v1h-2zM18 7h2v1h-2zM21 7h1v1h-1zM23 7h2v1h-2zM28 7h4v1h-4zM33 7h1v1h-1zM35 7h1v1h-1zM10 8h3v1h-3zM15 8h3v1h-3zM19 8h3v1h-3zM23 8h12v1h-12zM10 9h1v1h-1zM17 9h4v1h-4zM22 9h7v1h-7zM30 9h2v1h-2zM34 9h2v1h-2zM9 10h1v1h-1zM11 10h1v1h-1zM15 10h8v1h-8zM24 10h4v1h-4zM29 10h7v1h-7zM4 11h1v1h-1zM11 11h1v1h-1zM13 11h2v1h-2zM16 11h12v1h-12zM29 11h1v1h-1zM32 11h1v1h-1zM34 11h1v1h-1zM6 12h1v1h-1zM9 12h1v1h-1zM13 12h1v1h-1zM16 12h7v1h-7zM24 12h1v1h-1zM26 12h6v1h-6zM33 12h2v1h-2zM11 13h1v1h-1zM13 13h1v1h-1zM15 13h1v1h-1zM20 13h7v1h-7zM28 13h8v1h-8zM9 14h2v1h-2zM15 14h2v1h-2zM19 14h3v1h-3zM23 14h2v1h-2zM26 14h8v1h-8zM35 14h1v1h-1zM8 15h1v1h-1zM12 15h1v1h-1zM17 15h8v1h-8zM26 15h8v1h-8zM35 15h1v1h-1z" fill="#a3a7b3" shape-rendering="crispEdges"/></svg>
<div class="t" style="left:1071.5px;top:322.5px;font-size:11px;color:#f3e982;letter-spacing:0px;padding-left:0px;font-weight:700;transform:translate(-50%,-50%);font-family:'Liberation Serif',serif;">1</div>
<div class="t" style="left:1154.200px;top:301.700px;font-size:7.500px;color:#f0f0f3;letter-spacing:1px;padding-left:1px;font-weight:700;transform:translate(-50%,-50%) rotate(-90deg);">BYPASS</div>
<div class="b" style="left:53px;top:361px;width:1089px;height:5.5px;background:#40414e;border-radius:3px;"></div>
<div class="b" style="left:52.5px;top:360.8px;width:34.5px;height:5.7px;background:#16e98b;border-radius:3px;"></div>
<div class="b" style="left:1108px;top:360.8px;width:34.5px;height:5.7px;background:#16e98b;border-radius:3px;"></div>
<div class="b" style="left:53.0px;top:568.3px;width:66.2px;height:1.7px;background:#2bd178;"></div>
<div class="b" style="left:53.0px;top:570.5px;width:66.2px;height:26.2px;background:#3f404d;"></div>
<div class="b" style="left:186.9px;top:376.4px;width:2.969999999999999px;height:193.60000000000002px;background:#1d2a27;"></div>
<div class="b" style="left:121.2px;top:376.4px;width:66.2px;height:193.6px;background:#2ee07f;"></div>
<div class="b" style="left:121.2px;top:570.5px;width:66.2px;height:26.2px;background:#33343e;"></div>
<div class="b" style="left:189.3px;top:376.4px;width:66.2px;height:193.6px;background:#2ee07f;"></div>
<div class="b" style="left:189.3px;top:570.5px;width:66.2px;height:26.2px;background:#33343e;"></div>
<div class="b" style="left:257.5px;top:568.3px;width:66.2px;height:1.7px;background:#2bd178;"></div>
<div class="b" style="left:257.5px;top:570.5px;width:66.2px;height:26.2px;background:#33343e;"></div>
<div class="b" style="left:391.4px;top:376.4px;width:2.969999999999999px;height:193.60000000000002px;background:#1d2a27;"></div>
<div class="b" style="left:325.7px;top:376.4px;width:66.2px;height:193.6px;background:#2ee07f;"></div>
<div class="b" style="left:325.7px;top:570.5px;width:66.2px;height:26.2px;background:#3f404d;"></div>
<div class="b" style="left:393.9px;top:376.4px;width:66.2px;height:193.6px;background:#2ee07f;"></div>
<div class="b" style="left:393.9px;top:570.5px;width:66.2px;height:26.2px;background:#33343e;"></div>
<div class="b" style="left:462.0px;top:568.3px;width:66.2px;height:1.7px;background:#2bd178;"></div>
<div class="b" style="left:462.0px;top:570.5px;width:66.2px;height:26.2px;background:#33343e;"></div>
<div class="b" style="left:595.9000000000001px;top:376.4px;width:2.969999999999999px;height:193.60000000000002px;background:#1d2a27;"></div>
<div class="b" style="left:530.2px;top:376.4px;width:66.2px;height:193.6px;background:#2ee07f;"></div>
<div class="b" style="left:530.2px;top:570.5px;width:66.2px;height:26.2px;background:#33343e;"></div>
<div class="b" style="left:664.1px;top:376.4px;width:2.969999999999999px;height:193.60000000000002px;background:#1d2a27;"></div>
<div class="b" style="left:598.4px;top:376.4px;width:66.2px;height:193.6px;background:#2ee07f;"></div>
<div class="b" style="left:598.4px;top:570.5px;width:66.2px;height:26.2px;background:#3f404d;"></div>
<div class="b" style="left:666.5px;top:376.4px;width:66.2px;height:193.6px;background:#2ee07f;"></div>
<div class="b" style="left:666.5px;top:570.5px;width:66.2px;height:26.2px;background:#33343e;"></div>
<div class="b" style="left:734.7px;top:568.3px;width:66.2px;height:1.7px;background:#2bd178;"></div>
<div class="b" style="left:734.7px;top:570.5px;width:66.2px;height:26.2px;background:#33343e;"></div>
<div class="b" style="left:802.9px;top:376.4px;width:66.2px;height:193.6px;background:#2ee07f;"></div>
<div class="b" style="left:802.9px;top:570.5px;width:66.2px;height:26.2px;background:#33343e;"></div>
<div class="b" style="left:870.0px;top:375.2px;width:68.5px;height:194.8px;background:#97efbe;"></div>
<div class="b" style="left:871.0px;top:570.5px;width:66.2px;height:26.2px;background:#3f404d;"></div>
<div class="b" style="left:939.2px;top:568.3px;width:66.2px;height:1.7px;background:#2bd178;"></div>
<div class="b" style="left:939.2px;top:570.5px;width:66.2px;height:26.2px;background:#33343e;"></div>
<div class="b" style="left:1007.4px;top:568.3px;width:66.2px;height:1.7px;background:#2bd178;"></div>
<div class="b" style="left:1007.4px;top:570.5px;width:66.2px;height:26.2px;background:#33343e;"></div>
<div class="b" style="left:1075.6px;top:376.4px;width:66.2px;height:193.6px;background:#2ee07f;"></div>
<div class="b" style="left:1075.6px;top:570.5px;width:66.2px;height:26.2px;background:#33343e;"></div>
<div class="b" style="left:53.0px;top:768.3px;width:66.2px;height:1.7px;background:#2bd178;"></div>
<div class="b" style="left:53.0px;top:771px;width:66.2px;height:22.3px;background:#3f404d;"></div>
<div class="b" style="left:186.9px;top:597.6px;width:2.969999999999999px;height:172.39999999999998px;background:#1d2a27;"></div>
<div class="b" style="left:121.2px;top:597.6px;width:66.2px;height:172.4px;background:#2ee07f;"></div>
<div class="b" style="left:121.2px;top:771px;width:66.2px;height:22.3px;background:#33343e;"></div>
<div class="b" style="left:255.0px;top:597.6px;width:2.969999999999999px;height:172.39999999999998px;background:#1d2a27;"></div>
<div class="b" style="left:189.3px;top:597.6px;width:66.2px;height:172.4px;background:#2ee07f;"></div>
<div class="b" style="left:189.3px;top:771px;width:66.2px;height:22.3px;background:#33343e;"></div>
<div class="b" style="left:257.5px;top:597.6px;width:66.2px;height:172.4px;background:#2ee07f;"></div>
<div class="b" style="left:257.5px;top:771px;width:66.2px;height:22.3px;background:#33343e;"></div>
<div class="b" style="left:325.7px;top:768.3px;width:66.2px;height:1.7px;background:#2bd178;"></div>
<div class="b" style="left:325.7px;top:771px;width:66.2px;height:22.3px;background:#3f404d;"></div>
<div class="b" style="left:393.9px;top:597.6px;width:66.2px;height:172.4px;background:#2ee07f;"></div>
<div class="b" style="left:393.9px;top:771px;width:66.2px;height:22.3px;background:#33343e;"></div>
<div class="b" style="left:462.0px;top:768.3px;width:66.2px;height:1.7px;background:#2bd178;"></div>
<div class="b" style="left:462.0px;top:771px;width:66.2px;height:22.3px;background:#33343e;"></div>
<div class="b" style="left:595.9000000000001px;top:597.6px;width:2.969999999999999px;height:172.39999999999998px;background:#1d2a27;"></div>
<div class="b" style="left:530.2px;top:597.6px;width:66.2px;height:172.4px;background:#2ee07f;"></div>
<div class="b" style="left:530.2px;top:771px;width:66.2px;height:22.3px;background:#33343e;"></div>
<div class="b" style="left:598.4px;top:597.6px;width:66.2px;height:172.4px;background:#2ee07f;"></div>
<div class="b" style="left:598.4px;top:771px;width:66.2px;height:22.3px;background:#3f404d;"></div>
<div class="b" style="left:666.5px;top:768.3px;width:66.2px;height:1.7px;background:#2bd178;"></div>
<div class="b" style="left:666.5px;top:771px;width:66.2px;height:22.3px;background:#33343e;"></div>
<div class="b" style="left:734.7px;top:768.3px;width:66.2px;height:1.7px;background:#2bd178;"></div>
<div class="b" style="left:734.7px;top:771px;width:66.2px;height:22.3px;background:#33343e;"></div>
<div class="b" style="left:802.9px;top:768.3px;width:66.2px;height:1.7px;background:#2bd178;"></div>
<div class="b" style="left:802.9px;top:771px;width:66.2px;height:22.3px;background:#33343e;"></div>
<div class="b" style="left:870.0px;top:596.4px;width:68.5px;height:173.6px;background:#97efbe;"></div>
<div class="b" style="left:871.0px;top:771px;width:66.2px;height:22.3px;background:#3f404d;"></div>
<div class="b" style="left:939.2px;top:768.3px;width:66.2px;height:1.7px;background:#2bd178;"></div>
<div class="b" style="left:939.2px;top:771px;width:66.2px;height:22.3px;background:#33343e;"></div>
<div class="b" style="left:1073.1px;top:597.6px;width:2.969999999999999px;height:172.39999999999998px;background:#1d2a27;"></div>
<div class="b" style="left:1007.4px;top:597.6px;width:66.2px;height:172.4px;background:#2ee07f;"></div>
<div class="b" style="left:1007.4px;top:771px;width:66.2px;height:22.3px;background:#33343e;"></div>
<div class="b" style="left:1075.6px;top:597.6px;width:66.2px;height:172.4px;background:#2ee07f;"></div>
<div class="b" style="left:1075.6px;top:771px;width:66.2px;height:22.3px;background:#33343e;"></div>
<div class="b" style="left:24px;top:569.5px;width:17.5px;height:52.5px;background:#353640;border-radius:0 5px 5px 0;"></div>
<div class="b" style="left:1156.5px;top:569.5px;width:17px;height:52.5px;background:#353640;border-radius:5px 0 0 5px;"></div>
<svg class="b" style="left:25px;top:589px;" width="12" height="14" viewBox="0 0 12 14"><path d="M8 2.300 L3.500 7 L8 11.700" fill="none" stroke="#9ea2ae" stroke-width="1.300" stroke-linecap="round" stroke-linejoin="round"/></svg>
<svg class="b" style="left:1159px;top:589px;" width="12" height="14" viewBox="0 0 12 14"><path d="M4 2.300 L8.500 7 L4 11.700" fill="none" stroke="#9ea2ae" stroke-width="1.300" stroke-linecap="round" stroke-linejoin="round"/></svg>
<div class="b" style="left:53.3px;top:821.5px;width:65.6px;height:31.3px;background:#3f404d;border-radius:5px 0 0 5px;"></div>
<div class="t" style="left:86.0px;top:838px;font-size:9.7px;color:#fff;letter-spacing:0.8px;padding-left:0.8px;font-weight:700;transform:translate(-50%,-50%) scaleX(1.28);">1</div>
<div class="b" style="left:121.5px;top:821.5px;width:65.6px;height:31.3px;background:#3f404d;"></div>
<div class="t" style="left:154.2px;top:838px;font-size:9.7px;color:#fff;letter-spacing:0.8px;padding-left:0.8px;font-weight:700;transform:translate(-50%,-50%) scaleX(1.28);">2</div>
<div class="b" style="left:189.60000000000002px;top:821.5px;width:65.6px;height:31.3px;background:#2ee07f;"></div>
<div class="t" style="left:222.3px;top:838px;font-size:9.7px;color:#fff;letter-spacing:0.8px;padding-left:0.8px;font-weight:700;transform:translate(-50%,-50%) scaleX(1.28);">3</div>
<div class="b" style="left:257.8px;top:821.5px;width:65.6px;height:31.3px;background:#33343e;"></div>
<svg class="b" style="left:286.6px;top:833.5px;" width="8" height="8" viewBox="0 0 8 8"><path d="M4 0.600 L4.900 3.100 L7.400 4 L4.900 4.900 L4 7.400 L3.100 4.900 L0.600 4 L3.100 3.100 Z" fill="#9296a2"/></svg>
<div class="b" style="left:326.0px;top:821.5px;width:65.6px;height:31.3px;background:#33343e;"></div>
<svg class="b" style="left:354.8px;top:833.5px;" width="8" height="8" viewBox="0 0 8 8"><path d="M4 0.600 L4.900 3.100 L7.400 4 L4.900 4.900 L4 7.400 L3.100 4.900 L0.600 4 L3.100 3.100 Z" fill="#9296a2"/></svg>
<div class="b" style="left:394.2px;top:821.5px;width:65.6px;height:31.3px;background:#33343e;"></div>
<svg class="b" style="left:423.0px;top:833.5px;" width="8" height="8" viewBox="0 0 8 8"><path d="M4 0.600 L4.900 3.100 L7.400 4 L4.900 4.900 L4 7.400 L3.100 4.900 L0.600 4 L3.100 3.100 Z" fill="#9296a2"/></svg>
<div class="b" style="left:462.3px;top:821.5px;width:65.6px;height:31.3px;background:#33343e;"></div>
<svg class="b" style="left:491.1px;top:833.5px;" width="8" height="8" viewBox="0 0 8 8"><path d="M4 0.600 L4.900 3.100 L7.400 4 L4.900 4.900 L4 7.400 L3.100 4.900 L0.600 4 L3.100 3.100 Z" fill="#9296a2"/></svg>
<div class="b" style="left:530.5px;top:821.5px;width:65.6px;height:31.3px;background:#33343e;"></div>
<svg class="b" style="left:559.3000000000001px;top:833.5px;" width="8" height="8" viewBox="0 0 8 8"><path d="M4 0.600 L4.900 3.100 L7.400 4 L4.900 4.900 L4 7.400 L3.100 4.900 L0.600 4 L3.100 3.100 Z" fill="#9296a2"/></svg>
<div class="b" style="left:598.6999999999999px;top:821.5px;width:65.6px;height:31.3px;background:#3f404d;"></div>
<div class="t" style="left:631.4px;top:838px;font-size:9.7px;color:#fff;letter-spacing:0.8px;padding-left:0.8px;font-weight:700;transform:translate(-50%,-50%) scaleX(1.28);">9</div>
<div class="b" style="left:666.8px;top:821.5px;width:65.6px;height:31.3px;background:#3f404d;"></div>
<div class="t" style="left:699.5px;top:838px;font-size:9.7px;color:#fff;letter-spacing:0.8px;padding-left:0.8px;font-weight:700;transform:translate(-50%,-50%) scaleX(1.28);">10</div>
<div class="b" style="left:735.0px;top:821.5px;width:65.6px;height:31.3px;background:#3f404d;"></div>
<div class="t" style="left:767.7px;top:838px;font-size:9.7px;color:#fff;letter-spacing:0.8px;padding-left:0.8px;font-weight:700;transform:translate(-50%,-50%) scaleX(1.28);">11</div>
<div class="b" style="left:803.1999999999999px;top:821.5px;width:65.6px;height:31.3px;background:#33343e;"></div>
<svg class="b" style="left:832.0px;top:833.5px;" width="8" height="8" viewBox="0 0 8 8"><path d="M4 0.600 L4.900 3.100 L7.400 4 L4.900 4.900 L4 7.400 L3.100 4.900 L0.600 4 L3.100 3.100 Z" fill="#9296a2"/></svg>
<div class="b" style="left:871.3px;top:821.5px;width:65.6px;height:31.3px;background:#33343e;"></div>
<svg class="b" style="left:900.1px;top:833.5px;" width="8" height="8" viewBox="0 0 8 8"><path d="M4 0.600 L4.900 3.100 L7.400 4 L4.900 4.900 L4 7.400 L3.100 4.900 L0.600 4 L3.100 3.100 Z" fill="#9296a2"/></svg>
<div class="b" style="left:939.5px;top:821.5px;width:65.6px;height:31.3px;background:#33343e;"></div>
<svg class="b" style="left:968.3000000000001px;top:833.5px;" width="8" height="8" viewBox="0 0 8 8"><path d="M4 0.600 L4.900 3.100 L7.400 4 L4.900 4.900 L4 7.400 L3.100 4.900 L0.600 4 L3.100 3.100 Z" fill="#9296a2"/></svg>
<div class="b" style="left:1007.6999999999999px;top:821.5px;width:65.6px;height:31.3px;background:#33343e;"></div>
<svg class="b" style="left:1036.5px;top:833.5px;" width="8" height="8" viewBox="0 0 8 8"><path d="M4 0.600 L4.900 3.100 L7.400 4 L4.900 4.900 L4 7.400 L3.100 4.900 L0.600 4 L3.100 3.100 Z" fill="#9296a2"/></svg>
<div class="b" style="left:1075.8999999999999px;top:821.5px;width:65.6px;height:31.3px;background:#33343e;border-radius:0 5px 5px 0;"></div>
<svg class="b" style="left:1104.6999999999998px;top:833.5px;" width="8" height="8" viewBox="0 0 8 8"><path d="M4 0.600 L4.900 3.100 L7.400 4 L4.900 4.900 L4 7.400 L3.100 4.900 L0.600 4 L3.100 3.100 Z" fill="#9296a2"/></svg>
<svg class="b" style="left:1151px;top:832px;" width="17" height="11" viewBox="0 0 17 11"><path d="M4.800 0.800 H15 C15.800 0.800 16.300 1.300 16.300 2.100 V8.400 C16.300 9.200 15.800 9.700 15 9.700 H4.800 L0.800 5.250 Z" fill="#5d5f6c"/><path d="M8.600 3.300 L12.400 7.200 M12.400 3.300 L8.600 7.200" stroke="#2d2e38" stroke-width="1.200" stroke-linecap="round"/></svg>
</div></body></html>
